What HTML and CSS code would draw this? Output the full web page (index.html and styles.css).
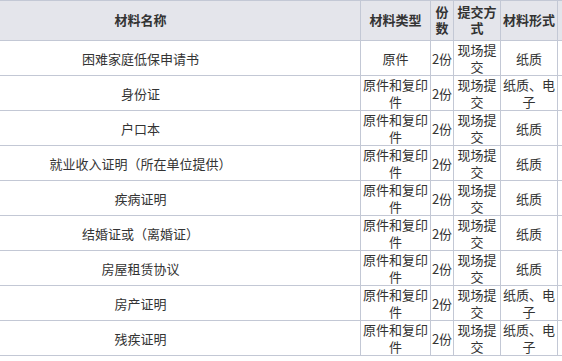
FILE: index.html
```html
<!DOCTYPE html>
<html lang="zh">
<head>
<meta charset="utf-8">
<title>材料清单</title>
<link rel="stylesheet" href="styles.css">
</head>
<body>
<table class="list">
  <colgroup>
    <col class="c-name">
    <col class="c-type">
    <col class="c-count">
    <col class="c-way">
    <col class="c-form">
    <col class="c-more">
  </colgroup>
  <thead>
    <tr>
      <th>材料名称</th>
      <th>材料类型</th>
      <th>份数</th>
      <th>提交方式</th>
      <th>材料形式</th>
      <th></th>
    </tr>
  </thead>
  <tbody>
    <tr><td>困难家庭低保申请书</td><td>原件</td><td>2份</td><td>现场提交</td><td>纸质</td><td></td></tr>
    <tr><td>身份证</td><td>原件和复印件</td><td>2份</td><td>现场提交</td><td>纸质、电子</td><td></td></tr>
    <tr><td>户口本</td><td>原件和复印件</td><td>2份</td><td>现场提交</td><td>纸质</td><td></td></tr>
    <tr><td>就业收入证明（所在单位提供）</td><td>原件和复印件</td><td>2份</td><td>现场提交</td><td>纸质</td><td></td></tr>
    <tr><td>疾病证明</td><td>原件和复印件</td><td>2份</td><td>现场提交</td><td>纸质</td><td></td></tr>
    <tr><td>结婚证或（离婚证）</td><td>原件和复印件</td><td>2份</td><td>现场提交</td><td>纸质</td><td></td></tr>
    <tr><td>房屋租赁协议</td><td>原件和复印件</td><td>2份</td><td>现场提交</td><td>纸质</td><td></td></tr>
    <tr><td>房产证明</td><td>原件和复印件</td><td>2份</td><td>现场提交</td><td>纸质、电子</td><td></td></tr>
    <tr><td>残疾证明</td><td>原件和复印件</td><td>2份</td><td>现场提交</td><td>纸质、电子</td><td></td></tr>
  </tbody>
</table>
</body>
</html>
```
FILE: styles.css
```css
html, body {
  margin: 0;
  padding: 0;
  background: #ffffff;
  overflow: hidden;
}

body {
  font-family: "Noto Sans CJK SC", "Noto Sans", sans-serif;
  font-size: 13px;
  color: #333333;
}

.list {
  border-collapse: collapse;
  table-layout: fixed;
  width: 697px;
  margin-left: -80px;
}

.c-name { width: 440px; }
.c-type { width: 70px; }
.c-count { width: 23px; }
.c-way { width: 47px; }
.c-form { width: 57px; }
.c-more { width: 60px; }

.list th,
.list td {
  border: 1px solid #c3c8d5;
  text-align: center;
  vertical-align: middle;
  padding: 0;
  word-break: break-all;
}

.list th {
  background: #e4e5eb;
  font-weight: bold;
  line-height: 16px;
  padding: 3px 0 4px;
  color: #333333;
}

.list td {
  line-height: 17px;
  height: 34px;
}
```
